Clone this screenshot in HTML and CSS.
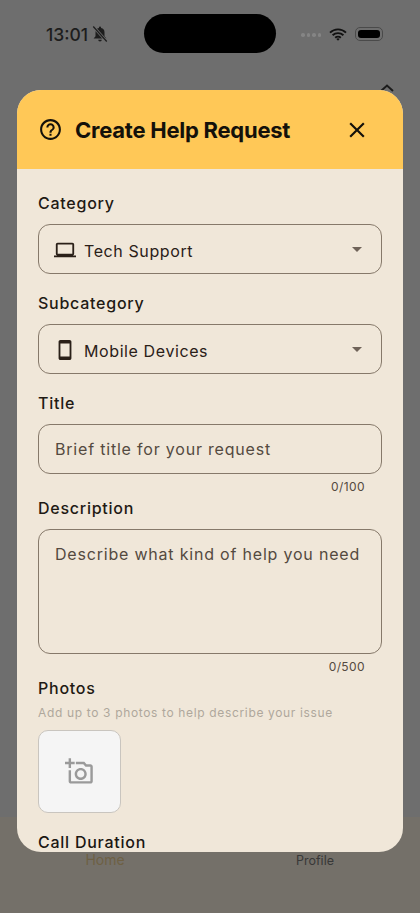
FILE: index.html
```html
<!DOCTYPE html>
<html lang="en">
<head>
    <meta charset="UTF-8">
    <meta name="viewport" content="width=device-width, initial-scale=1.0">
    <title>Create Help Request</title>
    <link rel="stylesheet" href="styles.css">
</head>
<body>
    <div class="screen">
        <div class="status-bar">
            <div class="status-left">
                <span class="status-time">13:01</span>
                <svg class="bell-icon" viewBox="0 0 24 24" width="18" height="18">
                    <path d="M12 2a1.400 1.400 0 0 1 1.400 1.400v.6A6 6 0 0 1 18 10v5l2.500 3H3.500L6 15v-5a6 6 0 0 1 4.600-6v-.6A1.400 1.400 0 0 1 12 2zM9.600 19.500h4.800a2.400 2.400 0 0 1-4.800 0z" fill="#1d1d1d"/>
                    <path d="M3 2l18 20" stroke="#6e6e6e" stroke-width="3.600"/>
                    <path d="M3 2l18 20" stroke="#1d1d1d" stroke-width="1.600"/>
                </svg>
            </div>
            <div class="status-right">
                <span class="signal-dots"><i></i><i></i><i></i><i></i></span>
                <svg viewBox="0 0 18 13" width="18" height="13">
                    <path d="M1 4.600a11.500 11.500 0 0 1 16 0M3.600 7.300a7.800 7.800 0 0 1 10.800 0M6.200 9.800a4 4 0 0 1 5.600 0" fill="none" stroke="#111" stroke-width="1.900"/>
                    <path d="M7.400 10.900a2.400 2.400 0 0 1 3.200 0L9 12.800z" fill="#111"/>
                </svg>
                <span class="battery"><span class="battery-level"></span></span>
            </div>
        </div>
        <div class="island"></div>

        <svg class="back-chevron" viewBox="0 0 14 8" width="14" height="8">
            <path d="M1 7l6-5.500L13 7" fill="none" stroke="#1c1c1c" stroke-width="2"/>
        </svg>

        <div class="bottom-nav">
            <span class="nav-home">Home</span>
            <span class="nav-profile">Profile</span>
        </div>

        <div class="modal">
            <div class="modal-header">
                <svg viewBox="0 0 24 24" width="25" height="25" fill="#14110a">
                    <path d="M11 18h2v-2h-2v2zm1-16C6.480 2 2 6.480 2 12s4.480 10 10 10 10-4.480 10-10S17.520 2 12 2zm0 18c-4.410 0-8-3.590-8-8s3.590-8 8-8 8 3.590 8 8-3.590 8-8 8zm0-14c-2.210 0-4 1.790-4 4h2c0-1.100.9-2 2-2s2 .9 2 2c0 2-3 1.750-3 5h2c0-2.250 3-2.500 3-5 0-2.210-1.790-4-4-4z"/>
                </svg>
                <h1 class="modal-title">Create Help Request</h1>
                <svg viewBox="0 0 24 24" width="26" height="26" fill="#14110a">
                    <path d="M19 6.410L17.590 5 12 10.590 6.410 5 5 6.410 10.590 12 5 17.590 6.410 19 12 13.410 17.590 19 19 17.590 13.410 12z"/>
                </svg>
            </div>

            <div class="modal-body">
                <label class="field-label">Category</label>
                <div class="field-box select-box">
                    <svg class="select-icon" viewBox="0 0 24 24" width="22" height="22" fill="#2a2018">
                        <path d="M20 18c1.100 0 1.990-.9 1.990-2L22 6c0-1.100-.9-2-2-2H4c-1.100 0-2 .9-2 2v10c0 1.100.9 2 2 2H0v2h24v-2h-4zM4 6h16v10H4V6z"/>
                    </svg>
                    <span class="select-text">Tech Support</span>
                    <span class="caret"></span>
                </div>

                <label class="field-label">Subcategory</label>
                <div class="field-box select-box">
                    <svg class="select-icon" viewBox="0 0 24 24" width="22" height="22" fill="#2a2018">
                        <path d="M17 1.010L7 1c-1.100 0-2 .9-2 2v18c0 1.100.9 2 2 2h10c1.100 0 2-.9 2-2V3c0-1.100-.9-1.990-2-1.990zM17 19H7V5h10v14z"/>
                    </svg>
                    <span class="select-text">Mobile Devices</span>
                    <span class="caret"></span>
                </div>

                <label class="field-label">Title</label>
                <div class="field-box input-box">Brief title for your request</div>
                <div class="counter">0/100</div>

                <label class="field-label field-label-after-counter">Description</label>
                <div class="field-box textarea-box">Describe what kind of help you need</div>
                <div class="counter">0/500</div>

                <label class="field-label field-label-after-counter">Photos</label>
                <p class="hint">Add up to 3 photos to help describe your issue</p>
                <div class="photo-tile">
                    <svg viewBox="0 0 24 24" width="29" height="29" fill="#9a9a9a">
                        <path d="M21 6h-3.170L16 4H9v2h6.120l1.830 2H21v12H5v-9H3v9c0 1.100.9 2 2 2h16c1.100 0 2-.9 2-2V8c0-1.100-.9-2-2-2zM8 14c0 2.760 2.240 5 5 5s5-2.240 5-5-2.240-5-5-5-5 2.240-5 5zm5-3c1.650 0 3 1.350 3 3s-1.350 3-3 3-3-1.350-3-3 1.350-3 3-3zM5 6h3V4H5V1H3v3H0v2h3v3h2z"/>
                    </svg>
                </div>

                <label class="field-label call-label">Call Duration</label>
            </div>
        </div>
    </div>
</body>
</html>
```

FILE: styles.css
```css
html, body {
    margin: 0;
    padding: 0;
}

body {
    font-family: Inter, "Liberation Sans", sans-serif;
}

.screen {
    position: relative;
    width: 420px;
    height: 913px;
    overflow: hidden;
    background: #6e6e6e;
}

.status-bar {
    display: flex;
    justify-content: space-between;
    align-items: center;
    height: 38px;
    padding: 15px 37px 0 46px;
}

.status-left {
    display: flex;
    align-items: center;
    gap: 3px;
}

.status-time {
    font-size: 17.500px;
    font-weight: 500;
    color: #1d1d1d;
}

.island {
    position: absolute;
    top: 14px;
    left: 144px;
    width: 132px;
    height: 39px;
    border-radius: 20px;
    background: #000;
}

.status-right {
    display: flex;
    align-items: center;
    gap: 8px;
}

.signal-dots {
    display: flex;
    gap: 2px;
    margin-top: 2px;
}

.signal-dots i {
    width: 3.500px;
    height: 3.500px;
    border-radius: 50%;
    background: #858585;
}

.battery {
    display: flex;
    width: 28px;
    height: 14px;
    padding: 2px;
    box-sizing: border-box;
    border: 1px solid #4a4a4a;
    border-radius: 5px;
}

.battery-level {
    flex: 1;
    border-radius: 3px;
    background: #000;
}

.back-chevron {
    position: absolute;
    top: 84px;
    left: 380px;
}

.bottom-nav {
    position: absolute;
    left: 0;
    right: 0;
    bottom: 0;
    display: grid;
    grid-template-columns: 1fr 1fr;
    height: 96px;
    justify-items: center;
    padding-top: 36px;
    box-sizing: border-box;
    background: #747069;
    font-size: 12.500px;
    line-height: 14px;
}

.nav-home {
    color: #6e6044;
    font-size: 14px;
}

.nav-profile {
    color: #383838;
    margin-top: 1px;
}

.modal {
    position: absolute;
    top: 90px;
    left: 17px;
    width: 386px;
    height: 762px;
    overflow: hidden;
    border-radius: 24px;
    background: #f0e7d9;
}

.modal-header {
    display: flex;
    align-items: center;
    height: 79px;
    padding: 0 33px 0 21px;
    box-sizing: border-box;
    background: #ffc857;
}

.modal-title {
    flex: 1;
    margin: 0 0 0 12px;
    font-size: 22px;
    font-weight: 700;
    letter-spacing: -0.25px;
    color: #14110a;
}

.modal-body {
    padding: 24px 21px 0;
}

.field-label {
    display: block;
    height: 20px;
    margin-bottom: 11px;
    font-size: 16px;
    line-height: 20px;
    font-weight: 500;
    letter-spacing: 0.75px;
    color: #1f1a14;
}

.field-box {
    box-sizing: border-box;
    width: 344px;
    border: 1px solid #86796a;
    border-radius: 12px;
    font-size: 16px;
    letter-spacing: 0.8px;
}

.select-box {
    display: flex;
    align-items: center;
    height: 50px;
    margin-bottom: 19px;
    padding: 0 19px 0 15px;
    letter-spacing: 0.6px;
    color: #2a2018;
}

.select-icon {
    flex: none;
    margin-top: 2px;
}

.select-text {
    flex: 1;
    margin-left: 8px;
    padding-top: 4px;
}

.caret {
    width: 0;
    height: 0;
    border-left: 5px solid transparent;
    border-right: 5px solid transparent;
    border-top: 5px solid #6f6359;
}

.input-box {
    height: 50px;
    padding: 0 16px;
    line-height: 48px;
    color: #544a40;
}

.textarea-box {
    height: 125px;
    padding: 14px 16px 0;
    line-height: 20px;
    color: #544a40;
}

.counter {
    height: 16px;
    margin-top: 5px;
    padding-right: 17px;
    text-align: right;
    font-size: 12px;
    line-height: 16px;
    letter-spacing: 0.4px;
    color: #544a40;
}

.field-label-after-counter {
    margin-top: 3px;
}

.hint {
    margin: -4px 0 9px;
    font-size: 12px;
    line-height: 16px;
    letter-spacing: 0.65px;
    color: #afa79c;
}

.photo-tile {
    display: flex;
    align-items: center;
    justify-content: center;
    box-sizing: border-box;
    width: 83px;
    height: 83px;
    border: 1px solid #c9c5bf;
    border-radius: 10px;
    background: #f5f5f5;
}

.call-label {
    margin-top: 19px;
    margin-bottom: 0;
    color: #1a1612;
}
```
